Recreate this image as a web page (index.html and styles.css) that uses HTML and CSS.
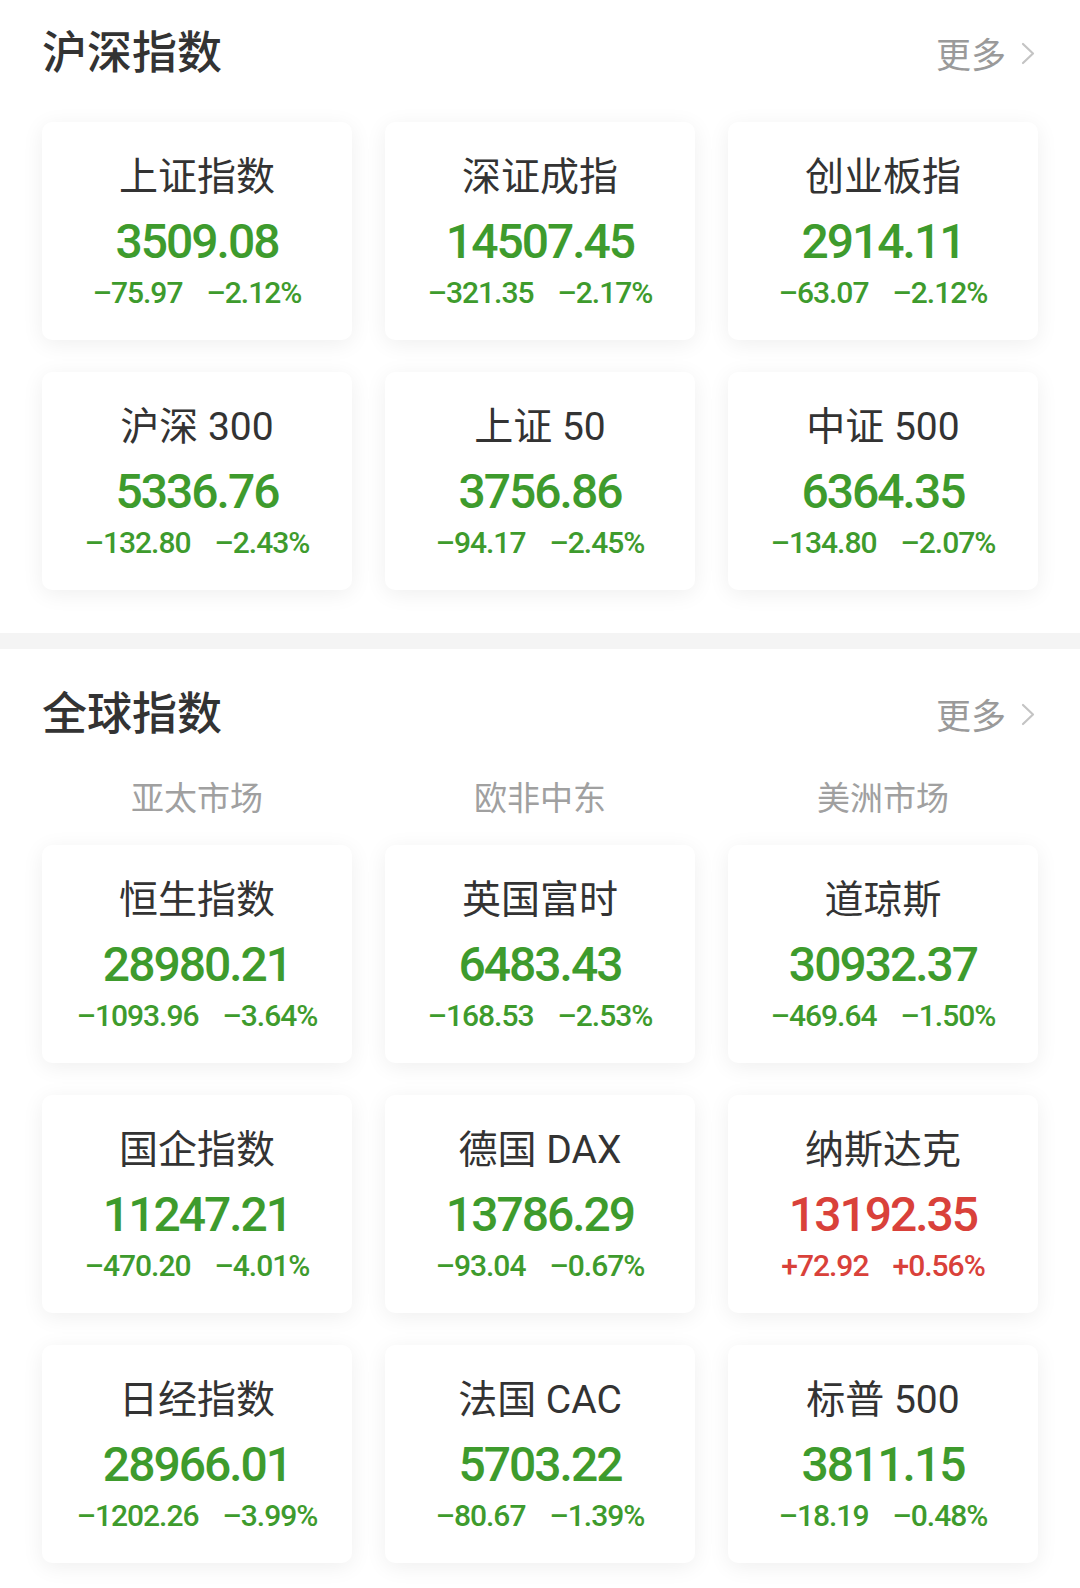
FILE: index.html
```html
<!DOCTYPE html>
<html lang="zh-CN">
<head>
<meta charset="utf-8">
<title>指数</title>
<link rel="stylesheet" href="styles.css">
</head>
<body>
<div class="page">
  <section class="block block-cn">
    <header class="block-head">
      <h2 class="block-title">沪深指数</h2>
      <a class="more">更多<svg class="chev" width="14" height="23" viewBox="0 0 14 23"><polyline points="2,2 12,11.5 2,21" fill="none" stroke="#c4c4c4" stroke-width="2.2" stroke-linecap="round" stroke-linejoin="round"/></svg></a>
    </header>
    <div class="grid">
      <div class="card"><div class="name">上证指数</div><div class="price down">3509.08</div><div class="change down"><span>–75.97</span><span>–2.12%</span></div></div>
      <div class="card"><div class="name">深证成指</div><div class="price down">14507.45</div><div class="change down"><span>–321.35</span><span>–2.17%</span></div></div>
      <div class="card"><div class="name">创业板指</div><div class="price down">2914.11</div><div class="change down"><span>–63.07</span><span>–2.12%</span></div></div>
      <div class="card"><div class="name">沪深 300</div><div class="price down">5336.76</div><div class="change down"><span>–132.80</span><span>–2.43%</span></div></div>
      <div class="card"><div class="name">上证 50</div><div class="price down">3756.86</div><div class="change down"><span>–94.17</span><span>–2.45%</span></div></div>
      <div class="card"><div class="name">中证 500</div><div class="price down">6364.35</div><div class="change down"><span>–134.80</span><span>–2.07%</span></div></div>
    </div>
  </section>
  <div class="divider"></div>
  <section class="block block-global">
    <header class="block-head">
      <h2 class="block-title">全球指数</h2>
      <a class="more">更多<svg class="chev" width="14" height="23" viewBox="0 0 14 23"><polyline points="2,2 12,11.5 2,21" fill="none" stroke="#c4c4c4" stroke-width="2.2" stroke-linecap="round" stroke-linejoin="round"/></svg></a>
    </header>
    <div class="tabs">
      <div class="tab">亚太市场</div>
      <div class="tab">欧非中东</div>
      <div class="tab">美洲市场</div>
    </div>
    <div class="grid">
      <div class="card"><div class="name">恒生指数</div><div class="price down">28980.21</div><div class="change down"><span>–1093.96</span><span>–3.64%</span></div></div>
      <div class="card"><div class="name">英国富时</div><div class="price down">6483.43</div><div class="change down"><span>–168.53</span><span>–2.53%</span></div></div>
      <div class="card"><div class="name">道琼斯</div><div class="price down">30932.37</div><div class="change down"><span>–469.64</span><span>–1.50%</span></div></div>
      <div class="card"><div class="name">国企指数</div><div class="price down">11247.21</div><div class="change down"><span>–470.20</span><span>–4.01%</span></div></div>
      <div class="card"><div class="name">德国 DAX</div><div class="price down">13786.29</div><div class="change down"><span>–93.04</span><span>–0.67%</span></div></div>
      <div class="card"><div class="name">纳斯达克</div><div class="price up">13192.35</div><div class="change up"><span>+72.92</span><span>+0.56%</span></div></div>
      <div class="card"><div class="name">日经指数</div><div class="price down">28966.01</div><div class="change down"><span>–1202.26</span><span>–3.99%</span></div></div>
      <div class="card"><div class="name">法国 CAC</div><div class="price down">5703.22</div><div class="change down"><span>–80.67</span><span>–1.39%</span></div></div>
      <div class="card"><div class="name">标普 500</div><div class="price down">3811.15</div><div class="change down"><span>–18.19</span><span>–0.48%</span></div></div>
    </div>
  </section>
</div>
</body>
</html>
```

FILE: styles.css
```css
* { box-sizing: border-box; }
html, body {
  margin: 0;
  padding: 0;
  background: #ffffff;
}
body {
  width: 1080px;
  height: 1588px;
  overflow: hidden;
  font-family: Roboto, "Noto Sans CJK SC", sans-serif;
  color: #333333;
}
.page {
  display: flex;
  flex-direction: column;
}
.block {
  padding: 0 42px;
}
.block-cn {
  padding-bottom: 43px;
}
.block-head {
  display: flex;
  align-items: center;
  justify-content: space-between;
  height: 100px;
}
.block-global .block-head {
  height: 124px;
}
.block-title {
  margin: 0;
  font-family: "Noto Sans CJK SC", sans-serif;
  font-size: 45px;
  font-weight: 500;
  line-height: 56px;
  color: #333333;
}
.more {
  display: flex;
  align-items: center;
  gap: 15px;
  margin-top: 6px;
  margin-right: 3px;
  font-family: "Noto Sans CJK SC", sans-serif;
  font-size: 35px;
  line-height: 44px;
  color: #9a9a9a;
}
.chev {
  display: block;
}
.grid {
  display: grid;
  grid-template-columns: repeat(3, 1fr);
  column-gap: 33px;
  row-gap: 32px;
  margin-top: 22px;
}
.block-global .grid {
  margin-top: 25px;
}
.card {
  height: 218px;
  background: #ffffff;
  border-radius: 10px;
  box-shadow: 0 4px 22px rgba(0, 0, 0, 0.065);
  display: flex;
  flex-direction: column;
  align-items: center;
  padding-top: 31px;
}
.name {
  font-size: 39px;
  line-height: 48px;
  color: #333333;
  white-space: nowrap;
}
.price {
  margin-top: 13px;
  font-size: 48px;
  font-weight: 500;
  line-height: 56px;
  letter-spacing: -2px;
}
.change {
  margin-top: 4px;
  display: flex;
  gap: 24px;
  font-size: 30px;
  font-weight: 500;
  line-height: 37px;
  letter-spacing: -1px;
}
.down { color: #3e9b2d; }
.up { color: #d9413a; }
.divider {
  height: 16px;
  background: #f4f4f4;
}
.tabs {
  display: grid;
  grid-template-columns: repeat(3, 1fr);
  column-gap: 33px;
}
.tab {
  text-align: center;
  font-family: "Noto Sans CJK SC", sans-serif;
  font-size: 33px;
  line-height: 47px;
  color: #a0a0a0;
}
```
